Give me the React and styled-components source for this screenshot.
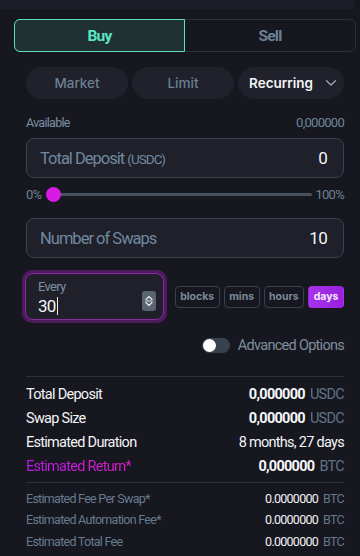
import React from "react";
import styled, { createGlobalStyle } from "styled-components";

const narrow = `"Roboto", "Liberation Sans", sans-serif`;
const geo = `"Inter", "Lato", sans-serif`;

const Global = createGlobalStyle`
  html, body { margin: 0; padding: 0; background: #17171f; }
  body { font-family: ${narrow}; letter-spacing: -0.045em; }
  * { box-sizing: border-box; }
`;

const Screen = styled.div`
  width: 360px;
  height: 556px;
  background: #17171f;
  overflow: hidden;
`;
const TopStrip = styled.div`
  height: 9px;
  background: #1c1d26;
  margin-right: 6px;
`;
const Body = styled.div`
  padding: 10px 16px 0 26px;
  display: flex;
  flex-direction: column;
`;
const SideToggle = styled.div`
  display: grid;
  grid-template-columns: 1fr 1fr;
  height: 33px;
  margin: 0 -12px 0 -12px;
  border: 1px solid #2c303b;
  border-radius: 6px;
`;
const SideBtn = styled.div`
  display: flex;
  align-items: center;
  justify-content: center;
  font-weight: 700;
  font-size: 15.5px;
  color: ${p => (p.$active ? "#5ce6c2" : "#6c8196")};
  background: ${p => (p.$active ? "#1f3133" : "transparent")};
  border: ${p => (p.$active ? "1px solid #5ce1c0" : "none")};
  border-radius: ${p => (p.$active ? "6px 0 0 6px" : "0")};
  margin: ${p => (p.$active ? "-1px 0 -1px -1px" : "0")};
`;
const Tabs = styled.div`
  display: grid;
  grid-template-columns: 102px 102px 106px;
  gap: 4px;
  margin-top: 15px;
`;
const Tab = styled.div`
  height: 32px;
  border-radius: 16px;
  background: #20212b;
  display: flex;
  align-items: center;
  justify-content: center;
  gap: 12px;
  font-family: ${geo};
  letter-spacing: 0;
  font-size: 13.5px;
  font-weight: ${p => (p.$active ? 600 : 500)};
  color: ${p => (p.$active ? "#f2f4f7" : "#6a7f92")};
  padding-left: ${p => (p.$active ? "4px" : "0")};
`;
const Row = styled.div`
  display: flex;
  align-items: center;
  justify-content: space-between;
`;
const AvailRow = styled(Row)`
  margin-top: 16px;
  height: 14px;
  font-size: 12.5px;
  color: #7890a4;
  span:last-child { font-size: 13px; color: #6d8497; }
`;
const Field = styled.div`
  margin-top: ${p => p.$mt}px;
  height: 40px;
  border: 1px solid #3a4250;
  background: #1f2029;
  border-radius: 8px;
  display: flex;
  align-items: center;
  justify-content: space-between;
  padding: 0 16px 0 13px;
`;
const FieldLabel = styled.div`
  font-size: 16.5px;
  letter-spacing: -0.06em;
  color: #7089a0;
  small { font-size: 13.5px; }
`;
const FieldValue = styled.div`
  font-size: 17px;
  color: #f4f6f8;
`;
const SliderRow = styled.div`
  margin-top: 8px;
  display: flex;
  align-items: center;
  gap: 6px;
  font-size: 13px;
  color: #6a8296;
  height: 17px;
`;
const Track = styled.div`
  position: relative;
  flex: 1;
  height: 3px;
  border-radius: 2px;
  background: #48525f;
  margin-left: 6px;
  margin-right: -3px;
`;
const Thumb = styled.div`
  position: absolute;
  left: -7px;
  top: -6px;
  width: 15px;
  height: 15px;
  border-radius: 50%;
  background: #d81ae6;
`;
const EveryRow = styled.div`
  display: flex;
  align-items: center;
  margin-top: 12px;
  margin-left: -4px;
  gap: 5px;
`;
const EveryOuter = styled.div`
  padding: 3px;
  border-radius: 10px;
  background: #4e1a5e;
`;
const EveryBox = styled.div`
  width: 139px;
  height: 47px;
  border: 1px solid #8b2aa3;
  border-radius: 8px;
  background: #1f2029;
  display: flex;
  align-items: center;
  justify-content: space-between;
  padding: 0 7px 0 12px;
`;
const EveryText = styled.div`
  display: flex;
  flex-direction: column;
  line-height: 1;
`;
const EveryLabel = styled.span`
  font-size: 13px;
  color: #7c8fa1;
  margin-top: 2px;
`;
const EveryValue = styled.span`
  font-size: 17px;
  color: #f3f5f8;
  margin-top: 4px;
  display: flex;
  align-items: center;
`;
const Caret = styled.span`
  display: inline-block;
  width: 1px;
  height: 18px;
  background: #e8eaee;
  margin-left: 1px;
`;
const Stepper = styled.div`
  width: 14px;
  height: 20px;
  border-radius: 3px;
  background: #5a6571;
  display: flex;
  align-items: center;
  justify-content: center;
  margin-top: 8px;
`;
const Units = styled.div`
  display: flex;
  gap: 4px;
  flex: 1;
  justify-content: flex-end;
`;
const Unit = styled.div`
  height: 22px;
  padding: 0 4.5px;
  border-radius: 4px;
  display: flex;
  align-items: center;
  font-family: ${geo};
  letter-spacing: 0;
  font-weight: 700;
  font-size: 10.5px;
  color: ${p => (p.$active ? "#f4eaff" : "#7a8a99")};
  border: 1px solid ${p => (p.$active ? "transparent" : "#3a414c")};
  background: ${p => (p.$active ? "linear-gradient(90deg, #a634ec, #9a1fde)" : "transparent")};
`;
const AdvRow = styled.div`
  display: flex;
  justify-content: flex-end;
  align-items: center;
  gap: 8px;
  height: 17px;
  margin-top: 14px;
  font-size: 14.5px;
  color: #7e8e9c;
`;
const Switch = styled.div`
  width: 28px;
  height: 15px;
  border-radius: 8px;
  background: #38424e;
  position: relative;
`;
const Knob = styled.div`
  position: absolute;
  left: 1px;
  top: 1px;
  width: 13px;
  height: 13px;
  border-radius: 50%;
  background: #ffffff;
`;
const Divider = styled.div`
  height: 1px;
  background: #2c3039;
  margin-top: ${p => p.$mt}px;
`;
const Summary = styled.div`
  display: flex;
  flex-direction: column;
  gap: 6px;
  margin-top: 8px;
`;
const SumRow = styled(Row)`
  height: 18px;
  font-size: 14.5px;
  color: #f2f4f6;
`;
const ReturnLabel = styled.span`
  background: linear-gradient(90deg, #b81ae8, #d81ec8);
  -webkit-background-clip: text;
  background-clip: text;
  color: transparent;
`;
const Val = styled.span`
  font-weight: 700;
  color: #f4f6f8;
  small { font-weight: 400; color: #5f7387; font-size: 14.5px; margin-left: 5px; }
`;
const PlainVal = styled.span`
  color: #f2f4f6;
`;
const Fees = styled.div`
  display: flex;
  flex-direction: column;
  gap: 5.5px;
  margin-top: 7px;
`;
const FeeRow = styled(Row)`
  height: 16px;
  font-size: 12.5px;
  color: #667b8f;
  b { font-weight: 400; color: #f0f2f4; }
  small { color: #66798c; font-size: 12.5px; margin-left: 5px; }
`;

const Chevron = () => (
  <svg width="12" height="8" viewBox="0 0 12 8" fill="none">
    <path d="M1.5 1.8 L6 6 L10.5 1.8" stroke="#9aa6b2" strokeWidth="1.3" strokeLinecap="round" strokeLinejoin="round" />
  </svg>
);

const UpDown = () => (
  <svg width="10" height="14" viewBox="0 0 10 14" fill="none">
    <path d="M2 5.5 L5 2.5 L8 5.5" stroke="#e6e9ec" strokeWidth="1.2" strokeLinecap="round" strokeLinejoin="round" />
    <path d="M1.5 7 H8.5" stroke="#e6e9ec" strokeWidth="0.9" />
    <path d="M2 8.5 L5 11.5 L8 8.5" stroke="#e6e9ec" strokeWidth="1.2" strokeLinecap="round" strokeLinejoin="round" />
  </svg>
);

export default function App() {
  return (
    <Screen>
      <Global />
      <TopStrip />
      <Body>
        <SideToggle>
          <SideBtn $active>Buy</SideBtn>
          <SideBtn>Sell</SideBtn>
        </SideToggle>
        <Tabs>
          <Tab>Market</Tab>
          <Tab>Limit</Tab>
          <Tab $active>Recurring <Chevron /></Tab>
        </Tabs>
        <AvailRow>
          <span>Available</span>
          <span>0,000000</span>
        </AvailRow>
        <Field $mt={9}>
          <FieldLabel>Total Deposit <small>(USDC)</small></FieldLabel>
          <FieldValue>0</FieldValue>
        </Field>
        <SliderRow>
          <span>0%</span>
          <Track><Thumb /></Track>
          <span>100%</span>
        </SliderRow>
        <Field $mt={15}>
          <FieldLabel>Number of Swaps</FieldLabel>
          <FieldValue>10</FieldValue>
        </Field>
        <EveryRow>
          <EveryOuter>
            <EveryBox>
              <EveryText>
                <EveryLabel>Every</EveryLabel>
                <EveryValue>30<Caret /></EveryValue>
              </EveryText>
              <Stepper><UpDown /></Stepper>
            </EveryBox>
          </EveryOuter>
          <Units>
            <Unit>blocks</Unit>
            <Unit>mins</Unit>
            <Unit>hours</Unit>
            <Unit $active>days</Unit>
          </Units>
        </EveryRow>
        <AdvRow>
          <Switch><Knob /></Switch>
          <span>Advanced Options</span>
        </AdvRow>
        <Divider $mt={22} />
        <Summary>
          <SumRow><span>Total Deposit</span><Val>0,000000<small>USDC</small></Val></SumRow>
          <SumRow><span>Swap Size</span><Val>0,000000<small>USDC</small></Val></SumRow>
          <SumRow><span>Estimated Duration</span><PlainVal>8 months, 27 days</PlainVal></SumRow>
          <SumRow><ReturnLabel>Estimated Return*</ReturnLabel><Val>0,000000<small>BTC</small></Val></SumRow>
        </Summary>
        <Divider $mt={7} />
        <Fees>
          <FeeRow><span>Estimated Fee Per Swap*</span><span><b>0.0000000</b><small>BTC</small></span></FeeRow>
          <FeeRow><span>Estimated Automation Fee*</span><span><b>0.0000000</b><small>BTC</small></span></FeeRow>
          <FeeRow><span>Estimated Total Fee</span><span><b>0.0000000</b><small>BTC</small></span></FeeRow>
        </Fees>
      </Body>
    </Screen>
  );
}
